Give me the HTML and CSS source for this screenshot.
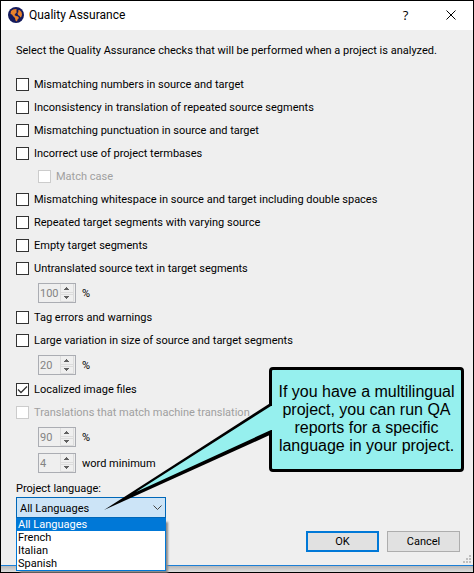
FILE: index.html
```
<!DOCTYPE html>
<html lang="en">
<head>
<meta charset="utf-8">
<title>Quality Assurance</title>
<link rel="stylesheet" href="styles.css">
</head>
<body>
<svg class="defs" width="0" height="0" aria-hidden="true">
  <symbol id="steps" viewBox="0 0 14 18">
    <path d="M.5 0V17.500H13.500V0M0 8.500H14M0 10.500H14" fill="none" stroke="#dcdcdc"/>
    <path d="M4 6h5v-1h-1v-1h-1v-1h-1v1h-1v1h-1zM4 12h5v1h-1v1h-1v1h-1v-1h-1v-1h-1z" fill="#606060"/>
  </symbol>
</svg>
<main class="dialog">
  <header class="titlebar">
    <svg class="globe" viewBox="0 0 16 16" aria-hidden="true">
      <circle cx="8" cy="8" r="8" fill="#141a5c"/>
      <path d="M3 4l2-1.500 3-.5 1 1-1 1 1 1-1.500 1.500-1 1.500 1.500 1 2 .5 1 1.500-1.500 1.500-.5 2-1.500-1-.5-2.500-2-2L4 7.500 2.500 7z" fill="#e8822a"/>
      <path d="M10 3.500l1.500-.5 2 2 .5 2.500-.5 2-1 1-1-1.500-1.500-1-.5-2 1-1z" fill="#e8822a"/>
    </svg>
    <h1 class="title">Quality Assurance</h1>
    <button class="tool" type="button" aria-label="Help">?</button>
    <button class="tool" type="button" aria-label="Close">
      <svg class="cross" viewBox="0 0 10 10"><path d="M.5 .5l9 9M9.500 .5l-9 9" stroke="#000" fill="none"/></svg>
    </button>
  </header>
  <form class="content">
    <p class="intro">Select the Quality Assurance checks that will be performed when a project is analyzed.</p>
    <label class="check"><input type="checkbox">Mismatching numbers in source and target</label>
    <label class="check"><input type="checkbox">Inconsistency in translation of repeated source segments</label>
    <label class="check"><input type="checkbox">Mismatching punctuation in source and target</label>
    <label class="check"><input type="checkbox">Incorrect use of project termbases</label>
    <label class="check nested disabled"><input type="checkbox" disabled>Match case</label>
    <label class="check"><input type="checkbox">Mismatching whitespace in source and target including double spaces</label>
    <label class="check"><input type="checkbox">Repeated target segments with varying source</label>
    <label class="check"><input type="checkbox">Empty target segments</label>
    <label class="check"><input type="checkbox">Untranslated source text in target segments</label>
    <label class="amount nested"><span class="spin"><input type="text" value="100" disabled><svg class="steps"><use href="#steps"/></svg></span>%</label>
    <label class="check"><input type="checkbox">Tag errors and warnings</label>
    <label class="check"><input type="checkbox">Large variation in size of source and target segments</label>
    <label class="amount nested"><span class="spin"><input type="text" value="20" disabled><svg class="steps"><use href="#steps"/></svg></span>%</label>
    <label class="check"><input type="checkbox" checked>Localized image files</label>
    <label class="check disabled"><input type="checkbox" disabled>Translations that match machine translation</label>
    <label class="amount nested"><span class="spin"><input type="text" value="90" disabled><svg class="steps"><use href="#steps"/></svg></span>%</label>
    <label class="amount nested"><span class="spin"><input type="text" value="4" disabled><svg class="steps"><use href="#steps"/></svg></span>word minimum</label>
    <label class="caption" for="language">Project language:</label>
    <div class="footer">
      <div class="combo">
        <select id="language">
          <option>All Languages</option><option>French</option><option>Italian</option><option>Spanish</option>
        </select>
        <svg class="chevron" viewBox="0 0 9 6" aria-hidden="true"><path d="M.5 .5l4 4 4-4" fill="none" stroke="#444"/></svg>
        <ul class="options">
          <li class="selected">All Languages</li>
          <li>French</li>
          <li>Italian</li>
          <li>Spanish</li>
        </ul>
      </div>
      <div class="actions">
        <button class="button primary" type="submit">OK</button>
        <button class="button" type="button">Cancel</button>
      </div>
    </div>
    <svg class="grip" viewBox="0 0 8 8" aria-hidden="true"><path d="M6 0h2v2h-2zM3 3h2v2h-2zM6 3h2v2h-2zM0 6h2v2h-2zM3 6h2v2h-2zM6 6h2v2h-2z" fill="#bfbfbf"/></svg>
  </form>
  <aside class="callout">
    <svg class="tail" viewBox="0 0 170 110" aria-hidden="true">
      <path d="M0 108L168 0V32z" fill="#000"/>
      <path d="M32 90L167 4L170 4V28L167 28z" fill="#96f0ee"/>
    </svg>
    <p>If you have a multilingual project, you can run QA reports for a specific language in your project.</p>
  </aside>
</main>
</body>
</html>
```
FILE: styles.css
```
* { box-sizing: border-box; }
body {
  margin: 0;
  background: #d2d2d2;
  color: #000;
  font: 11px/13px Roboto, "Open Sans", sans-serif;
}
h1, p, ul { margin: 0; padding: 0; }
button, input, select { font: inherit; color: inherit; margin: 0; }
.defs { position: absolute; }
.dialog {
  position: relative;
  min-height: 100vh;
  border: 1px solid #000;
  padding-bottom: 6px;
  background: linear-gradient(#b8b8b8, #dedede) bottom / 100% 6px no-repeat;
}
.titlebar {
  display: flex;
  align-items: center;
  height: 29px;
  padding: 0 0 2px 7px;
  background: #fff;
}
.globe { width: 16px; height: 16px; margin-right: 5px; }
.title { flex: 1; font: 12px/16px Roboto, sans-serif; }
.tool {
  display: grid;
  place-items: center;
  width: 45px;
  height: 26px;
  border: 0;
  padding: 0;
  background: none;
  font: 13px/16px "Open Sans", sans-serif;
}
.cross { width: 10px; height: 10px; }
.content {
  position: relative;
  display: flex;
  flex-direction: column;
  padding: 10px 13px 13px 15px;
  border-bottom: 1px solid #1c7fd6;
  background: #efefef;
}
.intro { height: 33px; line-height: 22px; white-space: nowrap; }
.check, .amount { display: flex; align-items: center; white-space: nowrap; }
.check { height: 23px; gap: 5px; }
.check input {
  appearance: none;
  width: 13px;
  height: 13px;
  border: 1px solid #333;
  background: #fff;
}
.check input:checked {
  background: #fff url("data:image/svg+xml,%3Csvg xmlns='http://www.w3.org/2000/svg' viewBox='0 0 11 11'%3E%3Cpath d='M1 5.500l3 3 6-6' fill='none' stroke='%23333' stroke-width='1.300'/%3E%3C/svg%3E");
}
.disabled { color: #a0a0a0; }
.check input:disabled { border-color: #ccc; }
.nested { margin-left: 22px; }
.amount { height: 26px; gap: 6px; }
.spin {
  display: flex;
  width: 38px;
  height: 20px;
  border: 1px solid #abadb3;
}
.spin input {
  flex: 1;
  min-width: 0;
  border: 0;
  padding: 0 0 0 1px;
  background: none;
  color: #838383;
}
.steps { width: 14px; height: 18px; margin-right: 1px; }
.caption { height: 21px; line-height: 26px; }
.footer { display: flex; justify-content: space-between; align-items: flex-start; }
.combo { position: relative; width: 150px; }
.combo select {
  display: block;
  appearance: none;
  width: 100%;
  height: 21px;
  border: 1px solid #0067b8;
  border-radius: 0;
  padding: 1px 20px 0 3px;
  background: #cce4f7;
}
.chevron { position: absolute; top: 8px; right: 4px; width: 9px; height: 6px; }
.options {
  position: absolute;
  top: 100%;
  left: 0;
  width: 100%;
  border: 1px solid #0078d7;
  border-top: 0;
  background: #fff;
  box-shadow: 3px 3px 2px -1px #888;
  list-style: none;
}
.options li { padding-left: 1px; }
.options .selected { background: #0078d7; color: #fff; }
.actions { display: flex; gap: 8px; margin-top: 34px; }
.button {
  width: 73px;
  height: 21px;
  border: 1px solid #adadad;
  padding: 0;
  background: #e1e1e1;
}
.primary { border: 2px solid #0078d7; }
.grip { position: absolute; right: 2px; bottom: 2px; width: 8px; height: 8px; }
.callout {
  position: absolute;
  right: 9px;
  top: 366px;
  width: 195px;
  height: 105px;
  border: 3px solid #000;
  border-radius: 4px;
  padding-top: 13px;
  background: #96f0ee;
  font: 16px/18px "Liberation Sans", sans-serif;
  text-align: center;
}
.tail { position: absolute; left: -168px; top: 32px; width: 170px; height: 110px; }
```
